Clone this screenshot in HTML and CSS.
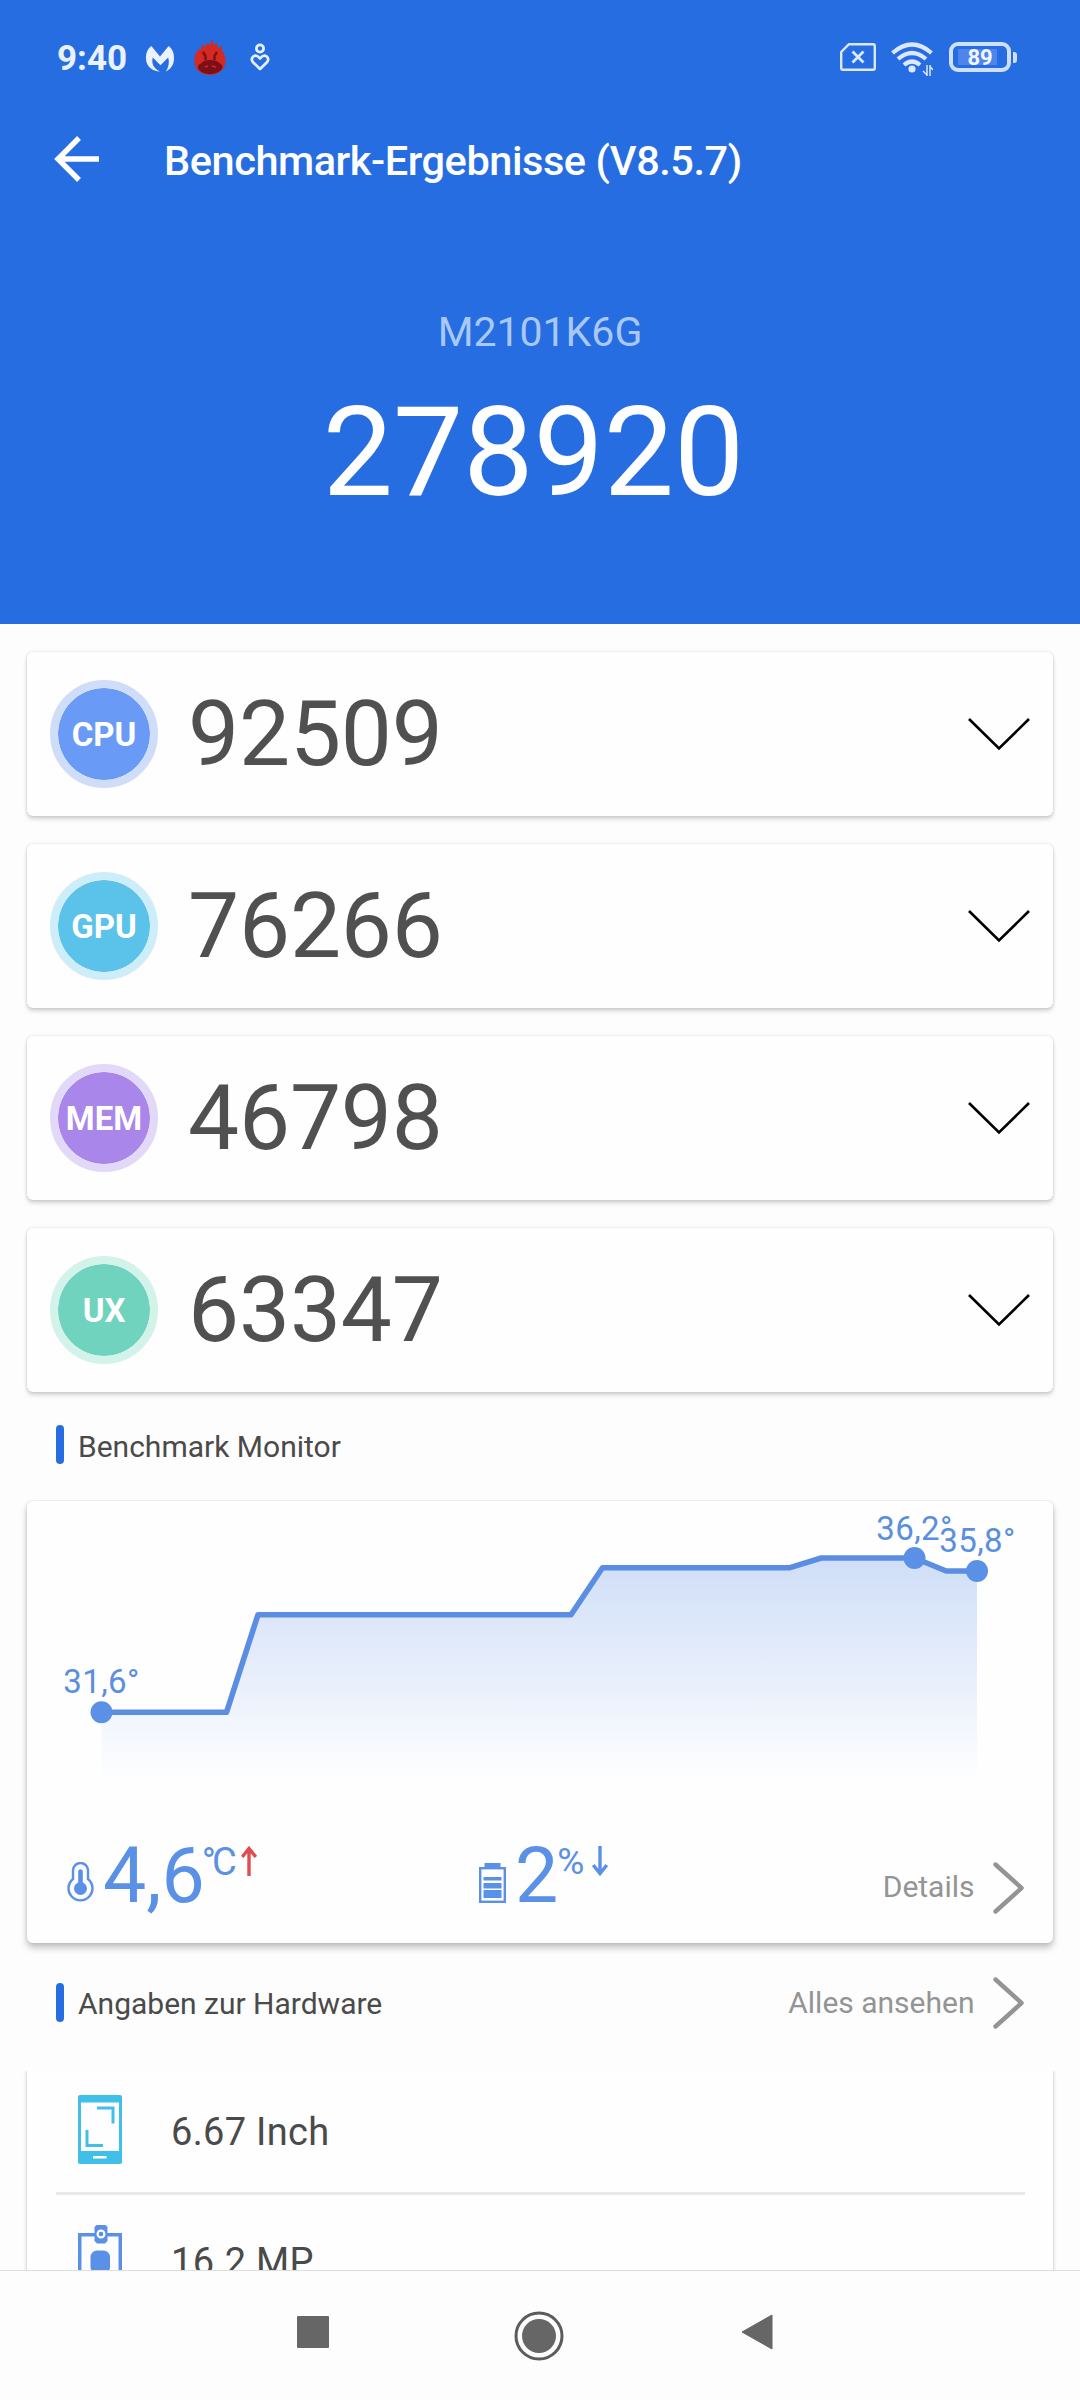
FILE: index.html
```html
<!DOCTYPE html>
<html lang="de">
<head>
<meta charset="utf-8">
<title>Benchmark-Ergebnisse</title>
<link rel="stylesheet" href="styles.css">
</head>
<body>
<svg class="defs" width="0" height="0" aria-hidden="true">
  <symbol id="chev-down" viewBox="0 0 64 36"><path d="M2 3L32 32.500L62 3" fill="none" stroke="#000" stroke-width="2.600"/></symbol>
  <symbol id="chev-right" viewBox="0 0 32 52"><path d="M2.500 2.500L28.500 26L2.500 49.500" fill="none" stroke="#949494" stroke-width="4.400" stroke-linecap="round" stroke-linejoin="round"/></symbol>
</svg>
<header class="header">
  <div class="statusbar">
    <span class="clock">9:40</span>
    <svg class="ico-malware" viewBox="0 0 30 28"><path d="M6 1L15 12L24 1C28 4 30 9 29.500 15C29 21 26 25 21 27.500C24 23 25 18 23.500 13L15.500 21L7.500 13C6 19 8 24 15 27.500C7 27.500 1 22 .5 15C0 9 2 4 6 1Z" fill="#eaf2ff"/></svg>
    <svg class="ico-antutu" viewBox="0 0 32 36">
      <path d="M5 10L7 11L8 5L11 8L13 4L16 6L18 0L20 6L23 4L24 9L28 7L28 12C31 15 32 19 31.500 23C31 31 24 36 16 36C7 36 1 31 .5 23C0 17 2 13 5 10Z" fill="#d42a22"/>
      <path d="M8 24C9 20 23 20 25 24C29 25 29 29 27 31C22 36.500 10 36.500 5 31C3 28 4 25 8 24Z" fill="#7d0f16"/>
      <path d="M9 13L11.500 17V21M23 13L20.500 17V21" fill="none" stroke="#7d0f16" stroke-width="2.400"/>
      <path d="M11 28L14 27M18 27L22 28" stroke="#d42a22" stroke-width="1.500"/>
    </svg>
    <svg class="ico-heart" viewBox="0 0 20 28"><g fill="none" stroke="#e6efff" stroke-width="2.800"><circle cx="10" cy="5.500" r="3.600"/><path d="M10 26L2.800 19C-.5 14.500 5.500 9.500 10 15.500C14.500 9.500 20.500 14.500 17.200 19Z" stroke-linejoin="round"/></g></svg>
    <div class="status-right">
      <svg class="ico-sim" viewBox="0 0 36 28"><path d="M9 1.200H33A1.800 1.800 0 0 1 34.800 3V25A1.800 1.800 0 0 1 33 26.800H3A1.800 1.800 0 0 1 1.200 25V9Z" fill="none" stroke="#dbe8ff" stroke-width="2.400" stroke-linejoin="round"/><path d="M12.500 8.500L23.500 19.500M23.500 8.500L12.500 19.500" stroke="#dbe8ff" stroke-width="2.800"/></svg>
      <svg class="ico-wifi" viewBox="0 0 42 34"><g fill="none" stroke="#dbe8ff" stroke-width="4.200"><path d="M1.500 11Q21 -6 40.500 11"/><path d="M7 17Q21 5 35 17"/><path d="M13 23Q21 16 29 23"/></g><circle cx="21" cy="27" r="3.600" fill="#dbe8ff"/><path d="M36 23V34M32 29L36 33M39 34V23M42 28L39 24.500" fill="none" stroke="#dbe8ff" stroke-width="1.500"/></svg>
      <div class="battery"><span class="battery-level">89</span></div>
      <span class="battery-nub"></span>
    </div>
  </div>
  <div class="titlebar">
    <svg class="back" viewBox="0 0 46 46"><path d="M25 2L4 23L25 44M4 23H45" fill="none" stroke="#fff" stroke-width="5.400"/></svg>
    <h1 class="title">Benchmark-Ergebnisse (V8.5.7)</h1>
  </div>
  <div class="model">M2101K6G</div>
  <div class="total">278920</div>
</header>

<main class="content">
  <section class="scores">
    <div class="card score"><span class="badge cpu">CPU</span><span class="points">92509</span><svg class="down"><use href="#chev-down"/></svg></div>
    <div class="card score"><span class="badge gpu">GPU</span><span class="points">76266</span><svg class="down"><use href="#chev-down"/></svg></div>
    <div class="card score"><span class="badge mem">MEM</span><span class="points">46798</span><svg class="down"><use href="#chev-down"/></svg></div>
    <div class="card score"><span class="badge ux">UX</span><span class="points">63347</span><svg class="down"><use href="#chev-down"/></svg></div>
  </section>

  <div class="section-head"><span class="tick"></span><h2 class="section-title">Benchmark Monitor</h2></div>

  <section class="card monitor">
    <svg class="chart" viewBox="28 1501 1024 300">
      <defs><linearGradient id="fade" x1="0" y1="1558" x2="0" y2="1780" gradientUnits="userSpaceOnUse"><stop offset="0" stop-color="#cfdef7"/><stop offset="1" stop-color="#fefeff"/></linearGradient></defs>
      <path d="M102 1712.300H227L258.500 1614.700H571.500L603 1567.700H790.500L821.700 1558H915L946.700 1571H977.500V1776H102Z" fill="url(#fade)"/>
      <path d="M102 1712.300H227L258.500 1614.700H571.500L603 1567.700H790.500L821.700 1558H915L946.700 1571H977.500" fill="none" stroke="#5b8ee3" stroke-width="5.600" stroke-linejoin="round"/>
      <g fill="#5a90e6"><circle cx="102" cy="1712.300" r="11"/><circle cx="915" cy="1558" r="11"/><circle cx="977.500" cy="1571" r="11"/></g>
      <g class="chart-label"><text x="102" y="1693">31,6°</text><text x="915" y="1539.500">36,2°</text><text x="978" y="1552">35,8°</text></g>
    </svg>
    <div class="metrics">
      <div class="metric temp">
        <svg class="ico-temp" viewBox="0 0 27 41"><path d="M6 17V8.500A7.500 7.500 0 0 1 21 8.500V17A12 12 0 1 1 6 17Z" fill="none" stroke="#5a90e6" stroke-width="2.400"/><circle cx="13.500" cy="26.500" r="6.500" fill="#5a90e6"/><path d="M13.500 26V9.500" stroke="#5a90e6" stroke-width="4.600" stroke-linecap="round"/></svg>
        <span class="value">4,6</span><span class="unit celsius">°C</span>
        <svg class="arrow" viewBox="0 0 16 30"><path d="M8 30V2M1.200 11L8 2.500L14.800 11" fill="none" stroke="#e04c50" stroke-width="3.400"/></svg>
      </div>
      <div class="metric power">
        <svg class="ico-batt" viewBox="0 0 27 40"><path d="M5.500 0H21.500V4H5.500Z" fill="#5a90e6"/><rect x="1.200" y="5.200" width="24.600" height="33.600" fill="none" stroke="#5a90e6" stroke-width="2.400"/><path d="M4.500 14H22.500V17.500H4.500ZM4.500 20H22.500V25.500H4.500ZM4.500 27H22.500V35H4.500Z" fill="#5a90e6"/></svg>
        <span class="value">2</span><span class="unit percent">%</span>
        <svg class="arrow" viewBox="0 0 16 30"><path d="M8 0V28M1.200 19L8 27.500L14.800 19" fill="none" stroke="#5a90e6" stroke-width="3.400"/></svg>
      </div>
      <a class="more details">Details<svg class="right"><use href="#chev-right"/></svg></a>
    </div>
  </section>

  <div class="section-head hardware-head"><span class="tick"></span><h2 class="section-title">Angaben zur Hardware</h2><a class="more">Alles ansehen<svg class="right"><use href="#chev-right"/></svg></a></div>

  <section class="card hardware">
    <div class="row">
      <svg class="ico-row" viewBox="0 0 44 69"><path fill-rule="evenodd" d="M2 0H42A2 2 0 0 1 44 2V67A2 2 0 0 1 42 69H2A2 2 0 0 1 0 67V2A2 2 0 0 1 2 0ZM3 7.500V56H41V7.500ZM15 61V63.500H28.500V61Z" fill="#40bfe9"/><path d="M19 13H35V28.500M9 35V50.500H25" fill="none" stroke="#40bfe9" stroke-width="3"/></svg>
      <span>6.67 Inch</span>
    </div>
    <div class="row">
      <svg class="ico-row" viewBox="0 0 44 69"><path d="M1.700 69V9.700H42.300V69" fill="none" stroke="#5a90e6" stroke-width="3.600"/><path d="M18.500 0H27.500L29.500 2V16L27 18.500H19L16.500 16V2Z" fill="#5a90e6"/><circle cx="23" cy="9" r="3.400" fill="#5a90e6" stroke="#fff" stroke-width="2.200"/><rect x="12.500" y="25.500" width="19.500" height="23" rx="6.500" fill="#5a90e6"/></svg>
      <span>16.2 MP</span>
    </div>
  </section>
</main>

<nav class="navbar">
  <svg class="nav-recent" viewBox="0 0 32 32"><rect width="32" height="32" rx="1" fill="#666"/></svg>
  <svg class="nav-home" viewBox="0 0 50 50"><circle cx="25" cy="25" r="23" fill="none" stroke="#5c5c5c" stroke-width="3"/><circle cx="25" cy="25" r="17" fill="#666"/></svg>
  <svg class="nav-back" viewBox="0 0 32 36"><path d="M31 1V35L1 18Z" fill="#666" stroke="#666" stroke-linejoin="round"/></svg>
</nav>
</body>
</html>
```
FILE: styles.css
```css
* { box-sizing: border-box; }
body {
  margin: 0;
  width: 1080px;
  height: 2400px;
  overflow: hidden;
  display: flex;
  flex-direction: column;
  background: #fdfdfd;
  font-family: Roboto, "Liberation Sans", sans-serif;
  color: #4a4a4a;
}
svg { display: block; flex: none; }
.defs { position: absolute; }
h1, h2 { margin: 0; }

.header { height: 624px; flex: none; background: #266de1; color: #fff; }
.statusbar { height: 114px; padding: 0 63px 0 57px; display: flex; align-items: center; }
.clock { width: 88px; margin-top: 3px; font-size: 35px; font-weight: 700; line-height: 40px; color: #eaf2ff; }
.ico-malware { width: 30px; height: 27px; margin-top: 2px; }
.ico-antutu { width: 32px; height: 36px; margin-left: 19px; }
.ico-heart { width: 20px; height: 28px; margin-left: 24px; }
.status-right { margin-left: auto; display: flex; align-items: center; }
.ico-sim { width: 36px; height: 28px; }
.ico-wifi { width: 42px; height: 34px; margin: 4px 16px 0 15px; }
.battery { width: 62px; height: 30px; padding: 3px 5px; border: 4px solid #cfe0ff; border-radius: 9px; display: flex; }
.battery-level {
  flex: 1;
  background: linear-gradient(90deg, #4d85ec 88%, transparent 88%);
  color: #f2f7ff;
  font-size: 22px;
  font-weight: 700;
  line-height: 18px;
  text-align: center;
}
.battery-nub { width: 4px; height: 11px; margin-left: 2px; border-radius: 0 3px 3px 0; background: #cfe0ff; }

.titlebar { height: 90px; padding-left: 54px; display: flex; align-items: center; }
.back { width: 46px; height: 46px; }
.title { margin: 4px 0 0 64px; font-size: 41.500px; font-weight: 500; line-height: 56px; letter-spacing: -.45px; }
.model { margin-top: 103px; text-align: center; font-size: 41px; line-height: 50px; color: #a9c8f8; }
.total { margin: 22px 0 0; padding-right: 13px; text-align: center; font-size: 125px; line-height: 148px; }

.content { flex: 1; min-height: 0; overflow: hidden; padding: 28px 27.500px 0 27px; }
.card { background: #fefefe; border-radius: 6px; box-shadow: 0 3px 4px rgba(0, 0, 0, .17), 0 0 3px rgba(0, 0, 0, .13); }
.scores { display: flex; flex-direction: column; gap: 28px; }
.score { height: 164px; padding: 0 22px 0 23px; display: flex; align-items: center; }
.badge {
  width: 108px;
  height: 108px;
  border: 8px solid;
  border-radius: 50%;
  display: flex;
  align-items: center;
  justify-content: center;
  color: #fff;
  font-size: 33px;
  font-weight: 700;
}
.cpu { background: #699bf6; border-color: #cfddf8; background-clip: padding-box; }
.gpu { background: #5bc2ea; border-color: #cdeef8; background-clip: padding-box; }
.mem { background: #a886ea; border-color: #e2d8f8; background-clip: padding-box; }
.ux { background: #6fd3bd; border-color: #d2f2ea; background-clip: padding-box; }
.points { margin-left: 30px; font-size: 91px; line-height: 110px; letter-spacing: -.2px; color: #505050; }
.down { width: 64px; height: 36px; margin-left: auto; }

.section-head { height: 109px; padding: 0 28px 4px 29px; display: flex; align-items: center; }
.tick { width: 8px; height: 39px; border-radius: 4px; background: #266de1; }
.section-title { margin: 4px 0 0 14px; font-size: 30px; font-weight: 400; line-height: 40px; }
.more { margin-left: auto; display: flex; align-items: center; font-size: 30px; line-height: 40px; color: #949494; }
.right { width: 32px; height: 52px; margin-left: 18px; }

.monitor { height: 442px; box-shadow: 0 5px 7px rgba(0, 0, 0, .22), 0 0 4px rgba(0, 0, 0, .12); clip-path: inset(-1px -10px -20px); }
.chart { width: 1025px; height: 300px; }
.chart-label { font-size: 33px; letter-spacing: .4px; fill: #5a8ee0; text-anchor: middle; }
.metrics { height: 142px; padding: 0 28px 0 40px; display: flex; color: #5a90e6; }
.metric { display: flex; align-items: flex-start; }
.temp { width: 412px; }
.ico-temp { width: 27px; height: 41px; margin-top: 61px; }
.ico-batt { width: 27px; height: 40px; margin-top: 62px; }
.value { margin: 30px 0 0 9px; font-size: 77px; line-height: 90px; }
.unit { margin: 37px 0 0 -1px; font-size: 38px; line-height: 48px; }
.celsius { margin-left: -3px; letter-spacing: -4px; }
.percent { font-size: 37px; }
.arrow { width: 16px; height: 30px; margin: 45px 0 0 8px; }
.details { height: 52px; margin-top: 60px; }
.details .right { margin-top: 2px; }

.hardware-head { height: 122px; padding-bottom: 3px; }
.hardware-head .section-title { margin-top: 2px; }
.hardware-head .more { margin-top: 1px; }
.hardware { height: 420px; padding: 0 28px 0 29px; clip-path: inset(6px -10px 0); }
.row { height: 130px; padding: 1px 22px 0; display: flex; align-items: center; border-bottom: 3px solid #e8e8e8; font-size: 38px; letter-spacing: .3px; }
.row span { margin: 5px 0 0 49px; }
.ico-row { width: 44px; height: 69px; }

.navbar { height: 130px; flex: none; border-top: 1px solid #dedede; background: #fdfdfd; padding: 40px 0 0 297px; display: flex; }
.nav-recent { width: 32px; height: 32px; margin-top: 5px; }
.nav-home { width: 50px; height: 50px; margin-left: 185px; }
.nav-back { width: 32px; height: 36px; margin: 3px 0 0 177px; }
```
